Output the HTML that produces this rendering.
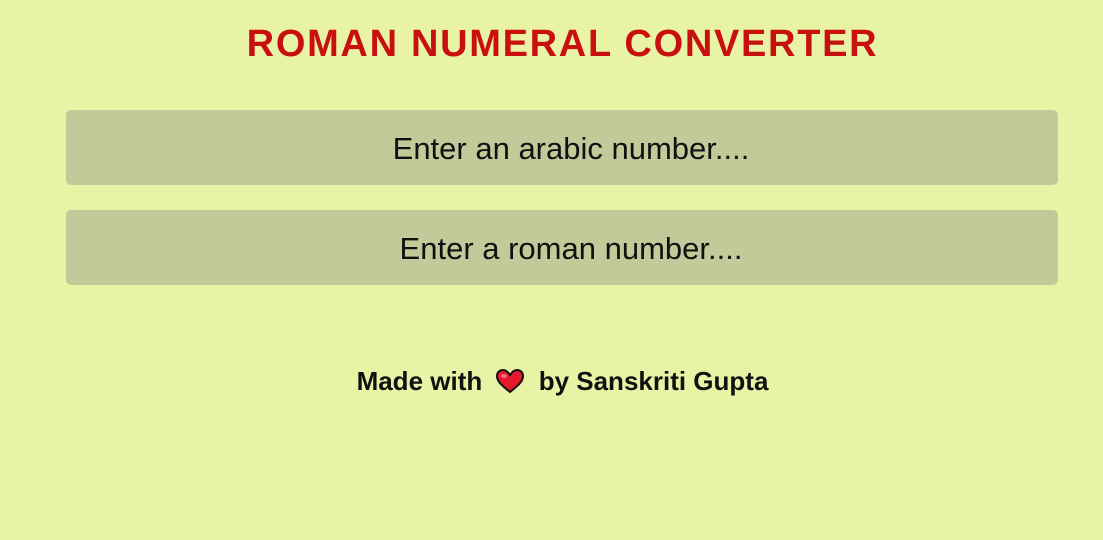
<!DOCTYPE html>
<html><head><style>
body{margin:0;width:1103px;height:540px;background:#e9f3a5;font-family:"Liberation Sans",sans-serif;overflow:hidden;position:relative}
h1{position:absolute;top:22px;left:11px;width:1103px;margin:0;text-align:center;color:#c8110f;font-size:38px;font-weight:bold;line-height:44px;letter-spacing:1.7px}
.box{position:absolute;left:66px;width:974px;padding-left:18px;height:75px;background:#c4c99a;border-radius:5px;text-align:center;line-height:77px;font-size:31px;color:#111}
.f{position:absolute;top:366px;left:11px;width:1103px;text-align:center;font-size:26px;font-weight:bold;color:#111;line-height:30px}
svg{vertical-align:-4px;margin:0 6px}
</style></head><body>
<h1>ROMAN NUMERAL CONVERTER</h1>
<div class="box" style="top:110px">Enter an arabic number....</div>
<div class="box" style="top:210px">Enter a roman number....</div>
<div class="f">Made with <svg width="30" height="26" viewBox="0 0 30 26"><path d="M15 24 C6 17 2 13 2 8 C2 4 5 2 8 2 C11 2 13 4 15 7 C17 4 19 2 22 2 C25 2 28 4 28 8 C28 13 24 17 15 24Z" fill="#e8182c" stroke="#111" stroke-width="2"/><ellipse cx="9" cy="8" rx="3" ry="2" fill="#f7707c"/></svg> by Sanskriti Gupta</div>
</body></html>
